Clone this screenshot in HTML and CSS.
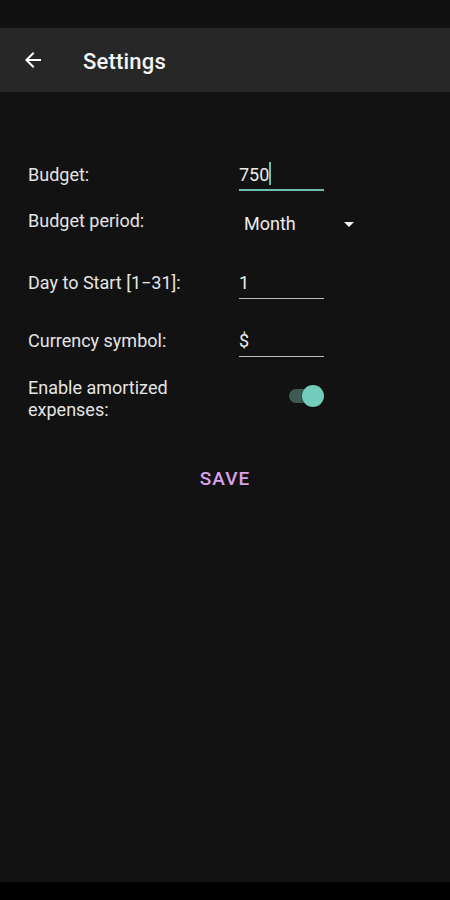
FILE: index.html
```html
<!DOCTYPE html>
<html>
<head>
<meta charset="utf-8">
<link rel="stylesheet" href="styles.css">
</head>
<body>
<div class="screen">
  <div class="status"></div>
  <header class="toolbar">
    <svg class="back" width="24" height="24" viewBox="0 0 24 24"><path d="M20 11H7.83l5.59-5.59L12 4l-8 8 8 8 1.41-1.41L7.83 13H20v-2z" fill="#fff"/></svg>
    <h1 class="title">Settings</h1>
  </header>
  <main class="content">
    <div class="row r-budget">
      <div class="label">Budget:</div>
      <div class="field active"><span class="val">750</span><span class="cursor"></span></div>
    </div>
    <div class="row r-period">
      <div class="label">Budget period:</div>
      <div class="select"><span class="val">Month</span><span class="caret"></span></div>
    </div>
    <div class="row r-day">
      <div class="label">Day to Start [1&minus;31]:</div>
      <div class="field"><span class="val">1</span></div>
    </div>
    <div class="row r-cur">
      <div class="label">Currency symbol:</div>
      <div class="field"><span class="val">$</span></div>
    </div>
    <div class="row r-amort">
      <div class="label">Enable amortized<br>expenses:</div>
      <div class="switch"><span class="track"></span><span class="thumb"></span></div>
    </div>
    <div class="save-wrap"><button class="save">SAVE</button></div>
  </main>
  <div class="navbar"></div>
</div>
</body>
</html>
```
FILE: styles.css
```css
html, body { margin: 0; padding: 0; }
body { background: #121212; font-family: Roboto, "Noto Sans", sans-serif; color: #e6e6e6; }
.screen { width: 450px; height: 900px; display: flex; flex-direction: column; background: #121212; }
.status { height: 28px; background: #111111; flex: none; }
.toolbar { height: 64px; background: #272727; display: flex; align-items: center; flex: none; }
.back { margin-left: 21px; width: 24px; height: 24px; }
.title { margin: 0 0 0 38px; font-size: 22px; font-weight: 500; color: #f5f5f5; letter-spacing: 0.2px; line-height: 26px; padding-top: 3px; }
.content { flex: 1; padding: 0 0 0 28px; display: flex; flex-direction: column; }
.row { display: flex; align-items: flex-start; }
.label { width: 211px; font-size: 18px; line-height: 22px; color: #e4e4e4; flex: none; }
.r-budget { margin-top: 72px; }
.field { position: relative; width: 85px; height: 26px; border-bottom: 1px solid #bdbdbd; display: flex; align-items: flex-start; }
.field .val { font-size: 18px; line-height: 22px; color: #ececec; }
.field.active { border-bottom: 2px solid #6bbfb0; height: 25px; }
.cursor { width: 2px; height: 23px; background: #6bbfb0; margin-top: -2px; }
.r-period { margin-top: 19px; }
.select { display: flex; align-items: center; width: 120px; padding-left: 5px; margin-top: 3px; }
.select .val { font-size: 18px; line-height: 22px; color: #ececec; width: 100px; }
.caret { width: 0; height: 0; border-left: 5px solid transparent; border-right: 5px solid transparent; border-top: 5px solid #f0f0f0; }
.r-day { margin-top: 37px; }
.r-cur { margin-top: 31px; }
.r-amort { margin-top: 20px; }
.switch { position: relative; width: 40px; height: 30px; margin-left: 49px; margin-top: 3px; }
.track { position: absolute; left: 1px; top: 9px; width: 32px; height: 14px; border-radius: 7px; background: #3f5a55; }
.thumb { position: absolute; left: 14px; top: 5px; width: 22px; height: 22px; border-radius: 50%; background: #72cdbd; box-shadow: 0 1px 2px rgba(0,0,0,0.5); }
.save-wrap { display: flex; justify-content: center; margin-left: -28px; margin-top: 38px; }
.save { background: none; border: none; font-family: Roboto, sans-serif; font-size: 19px; font-weight: 500; color: #d7a2ee; letter-spacing: 1px; padding: 8px 12px; }
.navbar { height: 18px; background: #000; flex: none; }
```
